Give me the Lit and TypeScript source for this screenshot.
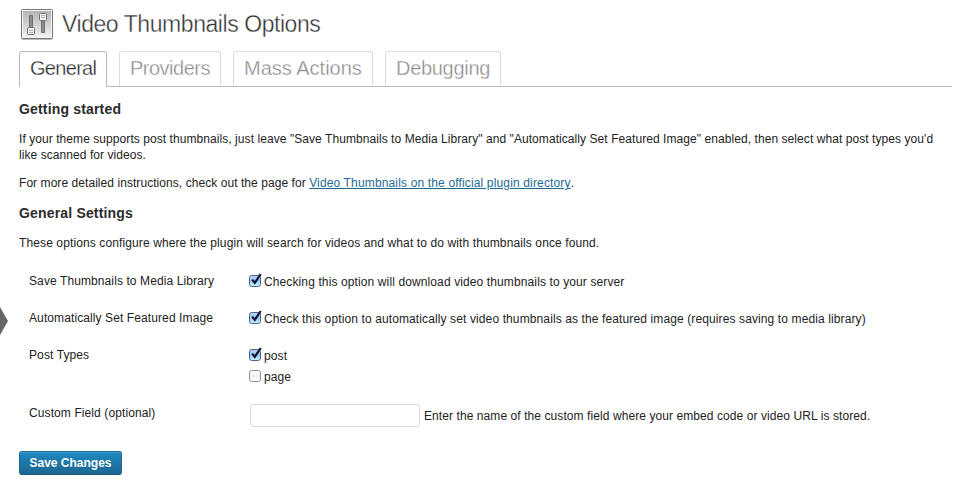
import { LitElement, html, css, svg } from "lit";
import { customElement, property } from "lit/decorators.js";
import { classMap } from "lit/directives/class-map.js";

@customElement("check-option")
class CheckOption extends LitElement {
  @property({ type: Boolean }) checked = false;

  static styles = css`
    :host { display: flex; height: 21px; align-items: flex-start; }
    svg { display: block; width: 16px; height: 16px; flex: none; margin-left: -1px; }
    .text { line-height: 16px; padding-top: 2px; white-space: nowrap; }
  `;

  render() {
    return html`
      <svg viewBox="0 0 16 16">
        <defs>
          <linearGradient id="on" x1="0" y1="0" x2="0" y2="1">
            <stop offset="0" stop-color="#b9d8f5" />
            <stop offset=".5" stop-color="#93c5f3" />
            <stop offset="1" stop-color="#cdf6ff" />
          </linearGradient>
          <linearGradient id="off" x1="0" y1="0" x2="0" y2="1">
            <stop offset="0" stop-color="#fff" />
            <stop offset=".5" stop-color="#efefef" />
            <stop offset="1" stop-color="#fff" />
          </linearGradient>
        </defs>
        <rect x="1.5" y="3.5" width="11" height="11" rx="2.2"
          fill=${this.checked ? "url(#on)" : "url(#off)"}
          stroke=${this.checked ? "#4c6391" : "#8f8f8f"} />
        ${this.checked
          ? svg`<path d="M4.2 7.6 6.8 10.9 12.7 2" fill="none" stroke="#10142b" stroke-width="2.2" />`
          : ""}
      </svg>
      <span class="text"><slot></slot></span>
    `;
  }
}

@customElement("app-root")
class AppRoot extends LitElement {
  private tabs = [
    { label: "General", cls: "general" },
    { label: "Providers", cls: "providers" },
    { label: "Mass Actions", cls: "mass" },
    { label: "Debugging", cls: "debugging" },
  ];

  static styles = css`
    :host {
      display: block; position: relative; box-sizing: border-box;
      width: 960px; height: 500px; overflow: hidden;
      padding: 9px 8px 0 19px; background: #fff; color: #222;
      font: 12px/16px "Liberation Sans", Arial, sans-serif;
    }
    h2, h3, p { margin: 0; white-space: nowrap; }
    .arrow { position: absolute; left: 0; top: 307px; width: 8px; height: 28px; }
    header { display: flex; height: 42px; }
    .icon { width: 34px; height: 32px; margin-left: 1px; flex: none; }
    h2 {
      font-size: 23px; line-height: 30px; font-weight: 300; margin-left: 8px; color: #333;
      letter-spacing: -.44px; -webkit-text-stroke: .35px #fff;
    }
    nav { display: flex; gap: 12px; height: 36px; box-sizing: border-box; border-bottom: 1px solid #bbb; }
    .tab {
      box-sizing: border-box; height: 35px; border: 1px solid #dcdcdc; border-bottom: 0;
      border-radius: 3px 3px 0 0; padding-left: 10px; color: #8c8c8c;
      font-size: 20px; line-height: 33px; white-space: nowrap; -webkit-text-stroke: .3px #fff;
    }
    .active { height: 36px; border-color: #bbb; background: #fff; color: #282828; }
    .general { width: 88px; letter-spacing: -.7px; }
    .providers { width: 102px; letter-spacing: -.5px; }
    .mass { width: 140px; }
    .debugging { width: 116px; letter-spacing: -.3px; }
    h3 { font-size: 14px; line-height: 18px; color: #2b2b2b; letter-spacing: .17px; }
    .started { margin-top: 13px; }
    .intro { margin-top: 13px; letter-spacing: .067px; }
    .more { margin-top: 12px; letter-spacing: .06px; }
    .settings { margin-top: 13px; }
    .desc { margin-top: 13px; letter-spacing: .113px; }
    a { color: #1d6a94; text-decoration: underline; letter-spacing: .15px; }
    .form { margin: 22px 0 0 10px; display: grid; grid-template-columns: 220px 1fr; grid-template-rows: 37px 37px 58px 40px; }
    .label { white-space: nowrap; letter-spacing: .1px; }
    .options { margin-top: -1px; letter-spacing: .115px; }
    .field { display: flex; margin: -1px 0 0 1px; gap: 4px; }
    input {
      box-sizing: border-box; width: 170px; height: 23px; margin: 0; padding: 3px;
      border: 1px solid #dadada; border-radius: 3px; background: #fff; font: inherit; outline: 0;
    }
    .hint { padding-top: 4px; white-space: nowrap; letter-spacing: .08px; }
    button {
      display: block; box-sizing: border-box; width: 103px; height: 24px; margin: 6px 0 0; padding: 0;
      border: 1px solid #1d6a94; border-bottom-color: #17587c; border-radius: 3px;
      background: linear-gradient(#1f88c0, #1c6791); box-shadow: inset 0 1px 0 rgba(100, 185, 230, .45);
      color: #fff; font: bold 12px/21px "Liberation Sans", Arial, sans-serif;
      text-shadow: 0 1px 0 rgba(0, 0, 0, .1); white-space: nowrap;
    }
  `;

  render() {
    return html`
      <svg class="arrow" viewBox="0 0 8 28"><path d="M0 0 8 14 0 28z" fill="#666" /></svg>
      <header>
        <svg class="icon" viewBox="0 0 34 32">
          <defs>
            <linearGradient id="bg" x1="0" y1="0" x2="0" y2="1">
              <stop offset="0" stop-color="#b4b4b4" /><stop offset="1" stop-color="#f0f0f0" />
            </linearGradient>
          </defs>
          <rect x="1.5" y="1" width="31" height="30" rx="1.5" fill="#bbb" />
          <rect x="1.5" y=".5" width="31" height="29" rx="1" fill="#f4f4f4" stroke="#777" />
          <rect x="3" y="2" width="28" height="26" fill="url(#bg)" />
          <g fill="#8f8f8f" stroke="#707070">
            <path d="M9.500 6.500h3v13h-3zM21.500 11.500h3v12h-3z" />
            <rect x="7.500" y="18.500" width="7" height="7" rx="1" fill="#f1f1f1" />
            <rect x="19.500" y="4.500" width="7" height="7" rx="1" fill="#f1f1f1" />
            <path d="M9 21.500h4M9 23.500h4M21 6.500h4M21 8.500h4" stroke="#b4b4b4" />
          </g>
        </svg>
        <h2>Video Thumbnails Options</h2>
      </header>
      <nav>
        ${this.tabs.map((t, i) => html`<div class=${classMap({ tab: true, active: i === 0, [t.cls]: true })}>${t.label}</div>`)}
      </nav>
      <h3 class="started">Getting started</h3>
      <p class="intro">If your theme supports post thumbnails, just leave "Save Thumbnails to Media Library" and "Automatically Set Featured Image" enabled, then select what post types you'd<br />like scanned for videos.</p>
      <p class="more">For more detailed instructions, check out the page for <a>Video Thumbnails on the official plugin directory</a>.</p>
      <h3 class="settings">General Settings</h3>
      <p class="desc">These options configure where the plugin will search for videos and what to do with thumbnails once found.</p>
      <div class="form">
        <div class="label">Save Thumbnails to Media Library</div>
        <div class="options"><check-option checked>Checking this option will download video thumbnails to your server</check-option></div>
        <div class="label">Automatically Set Featured Image</div>
        <div class="options"><check-option checked>Check this option to automatically set video thumbnails as the featured image (requires saving to media library)</check-option></div>
        <div class="label">Post Types</div>
        <div class="options"><check-option checked>post</check-option><check-option>page</check-option></div>
        <div class="label">Custom Field (optional)</div>
        <div class="field"><input type="text" /><span class="hint">Enter the name of the custom field where your embed code or video URL is stored.</span></div>
      </div>
      <button>Save Changes</button>
    `;
  }
}
